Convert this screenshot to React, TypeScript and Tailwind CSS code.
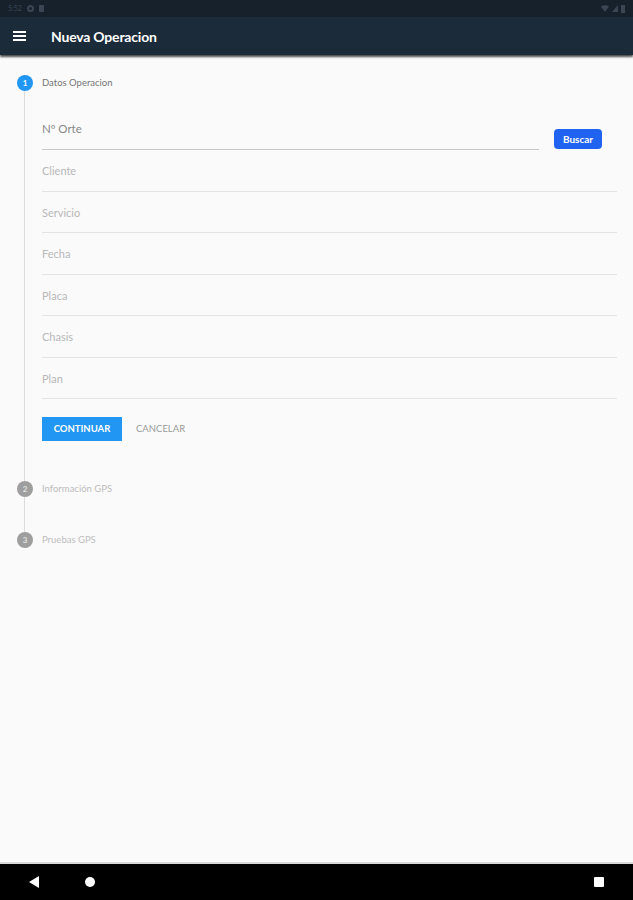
import { useState } from "react";

const fields = ["Cliente", "Servicio", "Fecha", "Placa", "Chasis", "Plan"];

export default function App() {
  const [orte, setOrte] = useState("");

  return (
    <div className="flex h-[900px] w-[633px] flex-col bg-[#fafafa] font-['Lato','Open_Sans',sans-serif]">
      {/* Status bar */}
      <div className="flex h-[17px] items-center justify-between bg-[#16212c] px-2">
        <div className="flex items-center gap-[5px] text-[7px] text-[#3a4653]">
          <span>5:52</span>
          <span className="h-[7px] w-[7px] rounded-full border-2 border-[#3a4653]" />
          <span className="h-[7px] w-[5px] rounded-[1px] bg-[#3a4653]" />
        </div>
        <div className="flex items-center gap-[3px]">
          <svg width="8" height="7" viewBox="0 0 8 7"><path d="M0 1.5 Q4 -1 8 1.5 L4 7 Z" fill="#3a4653" /></svg>
          <svg width="6" height="7" viewBox="0 0 6 7"><path d="M6 0 L6 7 L0 7 Z" fill="#3a4653" /></svg>
          <span className="h-[8px] w-[4px] bg-[#3a4653]" />
        </div>
      </div>

      {/* App bar */}
      <div className="relative flex h-[38px] items-center bg-[#1c2b3a] shadow-[0_2px_2px_rgba(0,0,0,0.7)]">
        <div className="ml-[13px] flex w-[13px] flex-col gap-[2px]">
          <span className="h-[2px] bg-white" />
          <span className="h-[2px] bg-white" />
          <span className="h-[2px] bg-white" />
        </div>
        <span className="ml-[25px] text-[14px] font-bold tracking-[-0.2px] text-white">Nueva Operacion</span>
      </div>

      {/* Stepper */}
      <div className="flex-1 pt-[20px]">
        {/* Step 1 */}
        <div className="flex items-center gap-[9px] pl-[17px]">
          <span className="flex h-[16px] w-[16px] items-center justify-center rounded-full bg-[#2196f3] text-[8px] font-bold text-white">1</span>
          <span className="text-[9.5px] text-[#757575]">Datos Operacion</span>
        </div>

        <div className="ml-[24px] border-l-[1.5px] border-[#dcdcdc] pb-[40px] pl-[17px] pt-[24px]">
          <div className="flex items-end pr-[31px]">
            <label className="block flex-1 border-b border-[#c8c8c8] pb-[10px]">
              <input
                value={orte}
                onChange={(e) => setOrte(e.target.value)}
                placeholder="Nº Orte"
                className="w-full bg-transparent text-[11.5px] text-[#555] placeholder:text-[#888] focus:outline-none"
              />
            </label>
            <button className="mb-[1px] ml-[15px] h-[20px] w-[48px] rounded-[4px] bg-[#1f63f0] text-[10px] font-bold text-white">
              Buscar
            </button>
          </div>

          <div className="pr-[16px]">
            {fields.map((f) => (
              <div key={f} className="border-b border-[#e4e4e4] pb-[12.5px] pt-[13px] text-[11px] leading-[15px] text-[#b8b8b8]">
                {f}
              </div>
            ))}
          </div>

          <div className="mt-[18px] flex items-center gap-[14px]">
            <button className="h-[24px] w-[80px] bg-[#2196f3] text-[9.5px] font-bold text-white">CONTINUAR</button>
            <button className="text-[9.5px] text-[#9a9a9a]">CANCELAR</button>
          </div>
        </div>

        {/* Step 2 */}
        <div className="flex items-center gap-[9px] pl-[17px]">
          <span className="flex h-[16px] w-[16px] items-center justify-center rounded-full bg-[#9e9e9e] text-[8px] font-bold text-[#e0e0e0]">2</span>
          <span className="text-[9.5px] text-[#bdbdbd]">Información GPS</span>
        </div>
        <div className="ml-[24px] h-[35px] border-l-[1.5px] border-[#dcdcdc]" />

        {/* Step 3 */}
        <div className="flex items-center gap-[9px] pl-[17px]">
          <span className="flex h-[16px] w-[16px] items-center justify-center rounded-full bg-[#9e9e9e] text-[8px] font-bold text-[#e0e0e0]">3</span>
          <span className="text-[9.5px] text-[#bdbdbd]">Pruebas GPS</span>
        </div>
      </div>

      {/* Nav bar */}
      <div className="flex h-[38px] items-center border-t-2 border-[#dadada] bg-black">
        <svg className="ml-[29px]" width="10" height="12" viewBox="0 0 10 12"><path d="M10 0 L10 12 L0 6 Z" fill="white" /></svg>
        <span className="ml-[46px] h-[10px] w-[10px] rounded-full bg-white" />
        <span className="ml-auto mr-[29px] h-[10px] w-[10px] rounded-[1px] bg-white" />
      </div>
    </div>
  );
}
